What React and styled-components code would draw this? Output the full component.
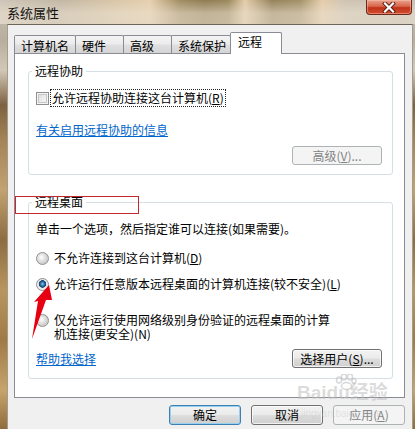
import React from "react";
import styled, { createGlobalStyle } from "styled-components";

const GlobalStyle = createGlobalStyle`
  html, body {
    margin: 0;
    padding: 0;
    overflow: hidden;
  }
  body {
    font-family: "Noto Sans CJK SC", "Liberation Sans", sans-serif;
    font-size: 12px;
    color: #000;
  }
`;

const StyleWindow = styled.div`
  position: relative;
  width: 415px;
  height: 429px;
  display: flex;
  flex-direction: column;
  overflow: hidden;
  background: linear-gradient(
    180deg,
    #c9c1b3 0px,
    #b7ae9e 40px,
    #d2c8b8 70px,
    #7d6242 105px,
    #a48457 140px,
    #c2a270 190px,
    #8d6d42 240px,
    #b8965f 290px,
    #a07a45 340px,
    #c6a46c 390px,
    #8f6c3c 429px
  );
`;

const StyleTitleBar = styled.div`
  height: 24px;
  flex: none;
  display: flex;
  justify-content: space-between;
  align-items: flex-start;
  background:
    linear-gradient(180deg, rgba(255, 255, 255, 0) 0%, rgba(236, 226, 210, 0.55) 55%, rgba(232, 222, 206, 0.6) 100%),
    linear-gradient(
      90deg,
      #cdc5b8 0px,
      #c2b7a4 60px,
      #d7c5a7 110px,
      #e6cfae 150px,
      #a08c62 180px,
      #8e7b52 205px,
      #9a875c 228px,
      #e2cba8 245px,
      #95825b 272px,
      #a29068 300px,
      #e4ccaa 322px,
      #cfc4b2 345px,
      #c6bfb3 415px
    );
`;

const StyleTitle = styled.div`
  padding: 5px 0 0 7px;
  font-size: 13px;
  line-height: 16px;
  color: #111;
`;

const StyleClose = styled.div`
  width: 44px;
  height: 14px;
  margin-right: 3px;
  display: flex;
  align-items: center;
  justify-content: center;
  border: 1px solid #6d2a1c;
  border-top: none;
  border-radius: 0 0 4px 4px;
  background: linear-gradient(180deg, #e9a48f 0%, #d8664a 45%, #c0321a 55%, #d2502e 100%);
  box-shadow: inset 0 0 0 1px rgba(255, 200, 180, 0.45);
`;

const StyleBody = styled.div`
  flex: 1;
  margin: 0 2px 0 7px;
  padding: 7px 7px 0 6px;
  background: #f0f0f0;
  border-top: 1px solid #6e6558;
  border-left: 1px solid #a69c8c;
  border-right: 1px solid #a69c8c;
  display: flex;
  flex-direction: column;
`;

const StyleTabs = styled.div`
  display: flex;
  align-items: flex-end;
  height: 21px;
  padding-left: 1px;
`;

const StyleTab = styled.div`
  position: relative;
  box-sizing: border-box;
  width: ${({ $w }) => $w}px;
  height: ${({ $active }) => ($active ? 22 : 18)}px;
  margin-left: -1px;
  margin-bottom: ${({ $active }) => ($active ? -1 : 0)}px;
  padding: ${({ $active }) => ($active ? "1px 0 0 7px" : "2px 0 0 6px")};
  line-height: 15px;
  border: 1px solid #898c95;
  border-bottom: none;
  border-radius: 2px 2px 0 0;
  z-index: ${({ $active }) => ($active ? 2 : 1)};
  background: ${({ $active }) =>
    $active
      ? "#ffffff"
      : "linear-gradient(180deg, #f4f4f4 0%, #ececec 45%, #dfdfdf 55%, #d4d4d4 100%)"};
`;

const StylePanel = styled.div`
  box-sizing: border-box;
  height: 345px;
  padding: 10px 11px 0 13px;
  background: #ffffff;
  border: 1px solid #898c95;
  display: flex;
  flex-direction: column;
`;

const StyleGroup = styled.fieldset`
  margin: ${({ $top }) => $top || 0}px 0 0 0;
  padding: 0 10px ${({ $pb }) => $pb}px 7px;
  min-inline-size: 0;
  border: 1px solid #d5dfe5;
  border-radius: 3px;
  display: flex;
  flex-direction: column;

  legend {
    margin-left: -4px;
    padding: 0 3px;
    line-height: 14px;
    font-size: 12px;
  }
`;

const StyleRow = styled.div`
  display: flex;
  align-items: ${({ $start }) => ($start ? "flex-start" : "center")};
  justify-content: ${({ $between }) => ($between ? "space-between" : "flex-start")};
  margin-top: ${({ $mt }) => $mt}px;
  min-height: 16px;
  line-height: 16px;
`;

const StyleCheck = styled.span`
  box-sizing: border-box;
  width: 13px;
  height: 13px;
  flex: none;
  border: 1px solid #8f8f8f;
  background: linear-gradient(135deg, #d8d8d8 0%, #eeeeee 60%, #fafafa 100%);
  box-shadow: inset 0 0 0 1px #f4f4f4, inset 0 0 0 2px #c8c8c8;
`;

const StyleRadio = styled.span`
  box-sizing: border-box;
  width: 13px;
  height: 13px;
  flex: none;
  border-radius: 50%;
  border: 1px solid #8e8f8f;
  background: ${({ $checked }) =>
    $checked
      ? "radial-gradient(circle at 50% 45%, #8fc6ec 0px, #2d6fa6 2px, #15426e 3.5px, #dfe3e6 4px, #f4f4f4 6px)"
      : "radial-gradient(circle at 40% 40%, #ffffff 0px, #e6e6e6 3px, #cfcfcf 6px)"};
  margin-top: ${({ $mt }) => $mt || 0}px;
`;

const StyleLabel = styled.span`
  margin-left: ${({ $ml }) => $ml || 4}px;
  padding: 0 1px;
  outline: ${({ $focus }) => ($focus ? "1px dotted #222" : "none")};
  max-width: ${({ $max }) => ($max ? `${$max}px` : "none")};
  line-height: ${({ $lh }) => $lh || 16}px;
`;

const StyleLink = styled.a`
  color: #0066cc;
  text-decoration: underline;
  line-height: 16px;
  cursor: pointer;
`;

const StyleButton = styled.button`
  box-sizing: border-box;
  width: ${({ $w }) => $w || 90}px;
  height: ${({ $h }) => $h || 19}px;
  padding: 0;
  font-family: inherit;
  font-size: 12px;
  line-height: 14px;
  border-radius: 3px;
  color: ${({ $disabled }) => ($disabled ? "#838383" : "#000")};
  border: 1px solid ${({ $disabled, $focus }) => ($disabled ? "#adb2b5" : $focus ? "#3c7fb1" : "#707070")};
  background: ${({ $disabled }) =>
    $disabled
      ? "#f4f4f4"
      : "linear-gradient(180deg, #f2f2f2 0%, #ebebeb 48%, #dddddd 52%, #cfcfcf 100%)"};
  box-shadow: ${({ $focus, $disabled }) =>
    $disabled ? "none" : $focus ? "inset 0 0 0 1px #98d1ef" : "inset 0 0 0 1px rgba(255,255,255,0.7)"};
`;

const StyleFooter = styled.div`
  display: flex;
  justify-content: flex-end;
  gap: 10px;
  margin-top: 7px;
`;

const StyleMark = styled.div`
  position: absolute;
  left: 15px;
  top: 196px;
  width: 122px;
  height: 16px;
  border: 1px solid #c3282e;
`;

const StyleArrow = styled.svg`
  position: absolute;
  left: 28px;
  top: 282px;
`;

const StyleWatermark = styled.div`
  position: absolute;
  left: 297px;
  top: 374px;
  display: flex;
  flex-direction: column;
  align-items: flex-start;
  pointer-events: none;
  color: rgba(190, 190, 190, 0.55);

  .brand {
    font-family: "Liberation Sans", "Noto Sans CJK SC", sans-serif;
    font-weight: bold;
    font-size: 19px;
    line-height: 22px;
    margin-top: 8px;
  }
  .site {
    font-family: "Liberation Sans", sans-serif;
    font-size: 10px;
    margin-top: 4px;
    margin-left: 4px;
    color: rgba(190, 190, 190, 0.35);
  }
`;

const StylePaw = styled.svg`
  position: absolute;
  left: 38px;
  top: 0;
`;

function Ul({ children }) {
  return (
    <>
      (<u>{children}</u>)
    </>
  );
}

export default function App() {
  return (
    <>
      <GlobalStyle />
      <StyleWindow>
        <StyleTitleBar>
          <StyleTitle>系统属性</StyleTitle>
          <StyleClose>
            <svg width="14" height="11" viewBox="0 0 14 11">
              <path d="M3 1.5 L11 9.5 M11 1.5 L3 9.5" stroke="#5a1a10" strokeWidth="4" strokeLinecap="square" />
              <path d="M3 1.5 L11 9.5 M11 1.5 L3 9.5" stroke="#ffffff" strokeWidth="2.2" strokeLinecap="square" />
            </svg>
          </StyleClose>
        </StyleTitleBar>
        <StyleBody>
          <StyleTabs>
            <StyleTab $w={62}>计算机名</StyleTab>
            <StyleTab $w={49}>硬件</StyleTab>
            <StyleTab $w={49}>高级</StyleTab>
            <StyleTab $w={60}>系统保护</StyleTab>
            <StyleTab $w={52} $active>远程</StyleTab>
          </StyleTabs>
          <StylePanel>
            <StyleGroup $pb={9}>
              <legend>远程协助</legend>
              <StyleRow $mt={12}>
                <StyleCheck />
                <StyleLabel $ml={2} $focus>
                  允许远程协助连接这台计算机<Ul>R</Ul>
                </StyleLabel>
              </StyleRow>
              <StyleRow $mt={16}>
                <StyleLink>有关启用远程协助的信息</StyleLink>
              </StyleRow>
              <StyleRow $mt={8} style={{ justifyContent: "flex-end" }}>
                <StyleButton $disabled>
                  高级<Ul>V</Ul>...
                </StyleButton>
              </StyleRow>
            </StyleGroup>
            <StyleGroup $top={20} $pb={10}>
              <legend>远程桌面</legend>
              <StyleRow $mt={12}>单击一个选项，然后指定谁可以连接(如果需要)。</StyleRow>
              <StyleRow $mt={13}>
                <StyleRadio />
                <StyleLabel>
                  不允许连接到这台计算机<Ul>D</Ul>
                </StyleLabel>
              </StyleRow>
              <StyleRow $mt={10}>
                <StyleRadio $checked />
                <StyleLabel>
                  允许运行任意版本远程桌面的计算机连接(较不安全)<Ul>L</Ul>
                </StyleLabel>
              </StyleRow>
              <StyleRow $mt={21} $start>
                <StyleRadio $mt={1} />
                <StyleLabel $max={284} $lh={14}>
                  仅允许运行使用网络级别身份验证的远程桌面的计算机连接(更安全)(N)
                </StyleLabel>
              </StyleRow>
              <StyleRow $mt={8} $between>
                <StyleLink>帮助我选择</StyleLink>
                <StyleButton>
                  选择用户<Ul>S</Ul>...
                </StyleButton>
              </StyleRow>
            </StyleGroup>
          </StylePanel>
          <StyleFooter>
            <StyleButton $w={72} $h={20} $focus>确定</StyleButton>
            <StyleButton $w={72} $h={20}>取消</StyleButton>
            <StyleButton $w={72} $h={20} $disabled>
              应用<Ul>A</Ul>
            </StyleButton>
          </StyleFooter>
        </StyleBody>

        <StyleWatermark>
          <StylePaw width="22" height="16" viewBox="0 0 22 16">
            <g fill="none" stroke="rgba(190,190,190,0.6)" strokeWidth="1.5">
              <ellipse cx="4" cy="6" rx="2.5" ry="3" />
              <ellipse cx="9" cy="3" rx="2.5" ry="3" />
              <ellipse cx="15" cy="3" rx="2.5" ry="3" />
              <ellipse cx="19" cy="7" rx="2" ry="2.6" />
              <ellipse cx="11.5" cy="12" rx="5" ry="3.5" />
            </g>
          </StylePaw>
          <div className="brand">Baidu经验</div>
          <div className="site">jingyan.baidu.com</div>
        </StyleWatermark>

        <StyleMark />
        <StyleArrow width="30" height="60" viewBox="0 0 30 60">
          <polygon points="21,3 24,18 18,18 4,57 10,19 6,20" fill="#e60012" />
        </StyleArrow>
      </StyleWindow>
    </>
  );
}
